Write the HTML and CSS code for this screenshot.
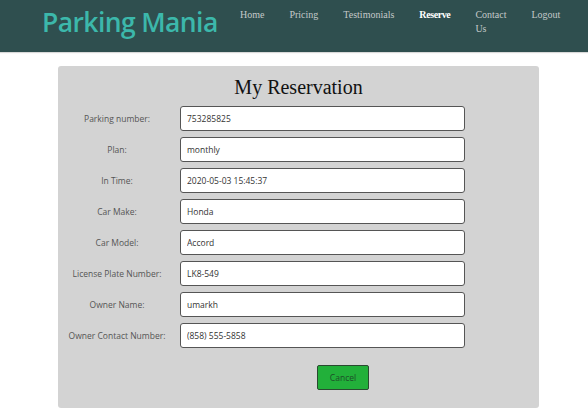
FILE: index.html
```html
<!DOCTYPE html>
<html>
<head>
<meta charset="utf-8">
<link rel="stylesheet" href="styles.css">
</head>
<body>
<header class="topbar">
  <div class="logo">Parking Mania</div>
  <nav class="nav">
    <a class="nav-link">Home</a>
    <a class="nav-link">Pricing</a>
    <a class="nav-link">Testimonials</a>
    <a class="nav-link active">Reserve</a>
    <a class="nav-link narrow">Contact Us</a>
    <a class="nav-link">Logout</a>
  </nav>
</header>
<main class="main">
  <section class="card">
    <h1 class="title">My Reservation</h1>
    <form class="form">
      <label class="lbl">Parking number:</label><input class="inp" value="753285825">
      <label class="lbl">Plan:</label><input class="inp" value="monthly">
      <label class="lbl">In Time:</label><input class="inp" value="2020-05-03 15:45:37">
      <label class="lbl">Car Make:</label><input class="inp" value="Honda">
      <label class="lbl">Car Model:</label><input class="inp" value="Accord">
      <label class="lbl">License Plate Number:</label><input class="inp" value="LK8-549">
      <label class="lbl">Owner Name:</label><input class="inp" value="umarkh">
      <label class="lbl">Owner Contact Number:</label><input class="inp" value="(858) 555-5858">
    </form>
    <div class="actions"><button class="btn" type="button">Cancel</button></div>
  </section>
</main>
</body>
</html>
```
FILE: styles.css
```css
* { box-sizing: border-box; }
html, body { margin: 0; padding: 0; background: #fff; }
body { font-family: "Open Sans", "Noto Sans", sans-serif; }

.topbar {
  height: 52px;
  background: #2f4f4f;
  display: flex;
  align-items: flex-start;
  box-shadow: 0 1px 1px rgba(0,0,0,0.15);
}
.logo {
  margin-left: 42px;
  margin-top: 3px;
  width: 176px;
  white-space: nowrap;
  font-family: "Open Sans", sans-serif;
  font-size: 26.5px;
  font-weight: 600;
  color: #3cb8ab;
  line-height: 38px;
  letter-spacing: -0.6px;
}
.nav {
  display: flex;
  margin-left: 22px;
  padding-top: 8px;
  gap: 25px;
}
.nav-link {
  font-family: "Liberation Serif", serif;
  font-size: 10px;
  line-height: 14px;
  color: #c4c9c9;
}
.nav-link.active { color: #fff; font-weight: bold; letter-spacing: -0.4px; }
.nav-link.narrow { width: 31px; }

.main { padding-top: 14px; }
.card {
  margin-left: 58px;
  width: 481px;
  background: #d3d3d3;
  border-radius: 3px;
  padding: 9px 0 18px;
}
.title {
  margin: 0 0 7px;
  text-align: center;
  font-family: "Liberation Serif", serif;
  font-weight: normal;
  font-size: 20px;
  line-height: 24px;
  color: #111;
}
.form {
  display: grid;
  grid-template-columns: 118px 285px;
  column-gap: 4px;
  row-gap: 6px;
  align-items: center;
}
.lbl {
  text-align: center;
  font-size: 8.5px;
  color: #555;
}
.inp {
  height: 25px;
  border: 1px solid #555;
  border-radius: 3px;
  background: #fff;
  padding: 0 6px;
  font-family: "Open Sans", sans-serif;
  font-size: 8.5px;
  color: #333;
}
.actions { padding: 16px 0 0 259px; }
.btn {
  width: 52px;
  height: 25px;
  background: #22b03a;
  border: 1px solid #2a4a30;
  border-radius: 2px;
  font-family: "Open Sans", sans-serif;
  font-size: 8.5px;
  color: #1d4d28;
  padding: 0;
}
```
